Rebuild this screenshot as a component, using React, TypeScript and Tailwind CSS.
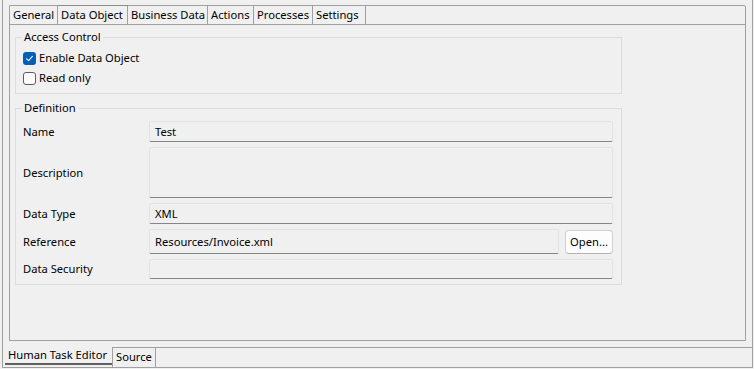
import React from 'react';

const editorTabs = [
  { label: 'General', width: 'w-[48px]', active: false },
  { label: 'Data Object', width: 'w-[70px]', active: true },
  { label: 'Business Data', width: 'w-[80px]', active: false },
  { label: 'Actions', width: 'w-[46px]', active: false },
  { label: 'Processes', width: 'w-[59px]', active: false },
  { label: 'Settings', width: 'w-[53px]', active: false },
];

function CheckBox({ checked, label }: { checked: boolean; label: string }) {
  return (
    <div className="flex items-center h-[20px]">
      {checked ? (
        <span className="w-[13px] h-[13px] rounded-[3px] bg-[#005fb8] flex items-center justify-center">
          <svg width="9" height="9" viewBox="0 0 9 9" fill="none">
            <path d="M1.6 4.8 L3.6 6.7 L7.4 2.4" stroke="white" strokeWidth="1.1" strokeLinecap="round" strokeLinejoin="round" />
          </svg>
        </span>
      ) : (
        <span className="w-[13px] h-[13px] rounded-[3px] bg-[#fbfbfb] border border-[#5d5d5d]" />
      )}
      <span className="ml-[3px]">{label}</span>
    </div>
  );
}

function Field({ label, value, height = 'h-[21px]', children }: { label: string; value?: string; height?: string; children?: React.ReactNode }) {
  return (
    <div className="flex items-center">
      <div className="w-[126px] shrink-0">{label}</div>
      <div className="flex-1 flex items-center gap-[6px]">
        <div className={`flex-1 ${height} bg-[#f0f0f0] border border-[#e3e3e3] border-b-[#858585] rounded-[2px] pl-[5px] flex items-center`}>
          {value}
        </div>
        {children}
      </div>
    </div>
  );
}

export default function App() {
  return (
    <div
      className="w-[754px] h-[369px] bg-[#f0f0f0] pl-[2px] pr-[1px] pb-[1px] flex text-[11.2px] leading-[16px] text-black"
      style={{ fontFamily: '"Noto Sans", "Segoe UI", sans-serif' }}
    >
      <div className="flex-1 flex flex-col border-l border-r border-b border-[#a0a0a0]">
        {/* Editor page with top tabs */}
        <div className="pt-[5px] pl-[6px] pr-[6px]">
          <div className="h-[336px] border border-[#a0a0a0] rounded-tr-[2px] flex flex-col">
            <div className="h-[19px] border-b border-[#a0a0a0] flex shrink-0">
              {editorTabs.map((t) => (
                <div
                  key={t.label}
                  className={`${t.width} h-[18px] border-r border-[#a0a0a0] pl-[3px] leading-[18px] whitespace-nowrap ${t.active ? 'bg-[#f0f0f0] shadow-[0_-1px_0_#8c8c8c]' : ''}`}
                >
                  {t.label}
                </div>
              ))}
            </div>

            <div className="pl-[5px] pt-[4px]">
              {/* Access Control */}
              <fieldset className="w-[607px] border border-[#dcdcdc] pl-[7px] pb-[5px]">
                <legend className="px-[2px] -ml-[1px] leading-[16px]">Access Control</legend>
                <div className="pt-[3px]">
                  <CheckBox checked label="Enable Data Object" />
                  <CheckBox checked={false} label="Read only" />
                </div>
              </fieldset>

              {/* Definition */}
              <fieldset className="w-[607px] mt-[6px] border border-[#dcdcdc] pl-[7px] pr-[8px] pb-[5px]">
                <legend className="px-[2px] -ml-[1px] leading-[16px]">Definition</legend>
                <div className="pt-[5px] flex flex-col gap-[5px]">
                  <Field label="Name" value="Test" />
                  <Field label="Description" height="h-[51px]" />
                  <Field label="Data Type" value="XML" />
                  <Field label="Reference" value="Resources/Invoice.xml" height="h-[25px]">
                    <button className="w-[48px] h-[24px] bg-[#fdfdfd] border border-[#d0d0d0] border-b-[#b5b5b5] rounded-[4px] text-[11.2px] leading-[16px]">
                      Open...
                    </button>
                  </Field>
                  <Field label="Data Security" height="h-[20px]" />
                </div>
              </fieldset>
            </div>
          </div>
        </div>

        {/* Bottom tabs */}
        <div className="flex-1 flex ml-[2px]">
          <div className="w-[107px] h-[24px] pt-[6px] pl-[3px] border-b-2 border-[#5f5f5f] whitespace-nowrap">
            Human Task Editor
          </div>
          <div className="mt-[6px] w-[44px] border-t border-l border-r border-[#a0a0a0] pl-[3px] leading-[17px]">
            Source
          </div>
          <div className="mt-[6px] flex-1 border-t border-[#a0a0a0]" />
        </div>
      </div>
    </div>
  );
}
